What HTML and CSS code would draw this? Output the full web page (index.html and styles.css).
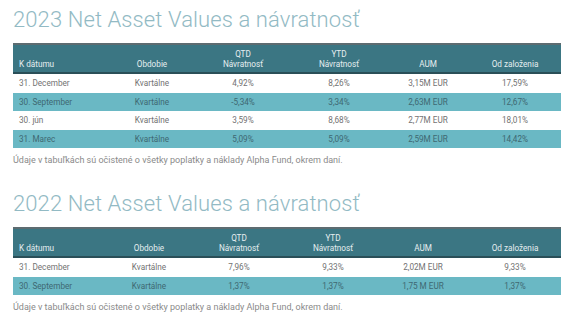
FILE: index.html
```html
<!DOCTYPE html>
<html lang="sk">
<head>
<meta charset="utf-8">
<title>Net Asset Values</title>
<link rel="stylesheet" href="styles.css">
</head>
<body>
<div class="page">
  <section class="block">
    <h1 class="title">2023 Net Asset Values a návratnosť</h1>
    <table class="nav t2023">
      <colgroup><col class="c1"><col class="c2"><col class="c3"><col class="c4"><col class="c5"><col class="c6"></colgroup>
      <thead>
        <tr><th class="left">K dátumu</th><th>Obdobie</th><th>QTD<br>Návratnosť</th><th>YTD<br>Návratnosť</th><th>AUM</th><th>Od založenia</th></tr>
      </thead>
      <tbody>
        <tr><td class="left">31. December</td><td>Kvartálne</td><td>4,92%</td><td>8,26%</td><td>3,15M EUR</td><td>17,59%</td></tr>
        <tr class="alt"><td class="left">30. September</td><td>Kvartálne</td><td>-5,34%</td><td>3,34%</td><td>2,63M EUR</td><td>12,67%</td></tr>
        <tr><td class="left">30. jún</td><td>Kvartálne</td><td>3,59%</td><td>8,68%</td><td>2,77M EUR</td><td>18,01%</td></tr>
        <tr class="alt"><td class="left">31. Marec</td><td>Kvartálne</td><td>5,09%</td><td>5,09%</td><td>2,59M EUR</td><td>14,42%</td></tr>
      </tbody>
    </table>
    <p class="note">Údaje v tabuľkách sú očistené o všetky poplatky a náklady Alpha Fund, okrem daní.</p>
  </section>
  <section class="block second">
    <h1 class="title">2022 Net Asset Values a návratnosť</h1>
    <table class="nav t2022">
      <colgroup><col class="c1"><col class="c2"><col class="c3"><col class="c4"><col class="c5"><col class="c6"></colgroup>
      <thead>
        <tr><th class="left">K dátumu</th><th>Obdobie</th><th>QTD<br>Návratnosť</th><th>YTD<br>Návratnosť</th><th>AUM</th><th>Od založenia</th></tr>
      </thead>
      <tbody>
        <tr><td class="left">31. December</td><td>Kvartálne</td><td>7,96%</td><td>9,33%</td><td>2,02M EUR</td><td>9,33%</td></tr>
        <tr class="alt"><td class="left">30. September</td><td>Kvartálne</td><td>1,37%</td><td>1,37%</td><td>1,75 M EUR</td><td>1,37%</td></tr>
      </tbody>
    </table>
    <p class="note">Údaje v tabuľkách sú očistené o všetky poplatky a náklady Alpha Fund, okrem daní.</p>
  </section>
</div>
</body>
</html>
```
FILE: styles.css
```css
html, body {
  margin: 0;
  padding: 0;
  background: #ffffff;
}
body {
  font-family: Roboto, "Liberation Sans", sans-serif;
  color: #666666;
}
.page {
  width: 548px;
  padding: 7px 19px 0 13px;
  display: flex;
  flex-direction: column;
}
.block {
  display: flex;
  flex-direction: column;
}
.second {
  margin-top: 24px;
}
.title {
  margin: 0 0 10px 0;
  font-weight: 300;
  font-size: 22px;
  line-height: 26px;
  color: #92bac4;
  letter-spacing: 0.1px;
}
.nav {
  width: 548px;
  table-layout: fixed;
  border-collapse: collapse;
  font-size: 8.2px;
}
.nav th {
  background: #3b7683;
  color: #e6eef0;
  font-weight: 400;
  line-height: 10px;
  vertical-align: bottom;
  text-align: center;
  padding: 4px 0 3px 0;
  border-top: 2px solid #5d6c71;
  border-bottom: 2px solid #2a4f58;
}
.nav td {
  height: 18.5px;
  padding: 0;
  text-align: center;
  vertical-align: middle;
  color: #727272;
}
.nav .left {
  text-align: left;
  padding-left: 6px;
}
.nav tr.alt td {
  background: #6ab8c4;
  color: #3f6872;
}
.t2023 .c1 { width: 96px; }
.t2023 .c2 { width: 86px; }
.t2023 .c3 { width: 96px; }
.t2023 .c4 { width: 96px; }
.t2023 .c5 { width: 82px; }
.t2023 .c6 { width: 92px; }
.t2022 .c1 { width: 96px; }
.t2022 .c2 { width: 80px; }
.t2022 .c3 { width: 100px; }
.t2022 .c4 { width: 88px; }
.t2022 .c5 { width: 92px; }
.t2022 .c6 { width: 92px; }
.note {
  margin: 5px 0 0 0;
  font-size: 9px;
  line-height: 14px;
  color: #8a8a8a;
}
```
